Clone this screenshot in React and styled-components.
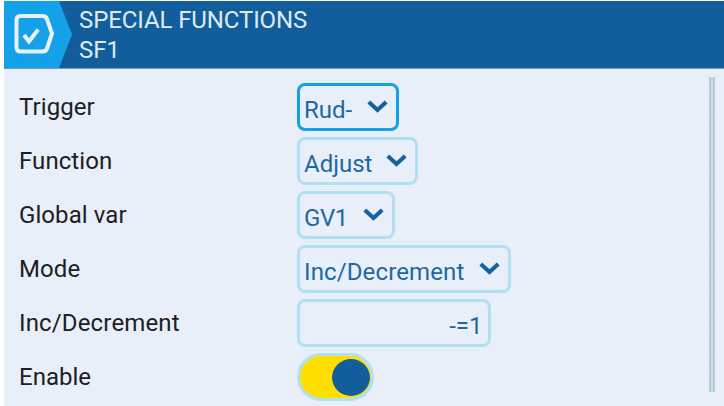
import styled, { createGlobalStyle } from "styled-components";

const GlobalStyle = createGlobalStyle`
  * {
    box-sizing: border-box;
  }

  body {
    margin: 0;
    background: #ffffff;
    font-family: Roboto, "Liberation Sans", sans-serif;
  }
`;

const Screen = styled.div`
  width: 724px;
  height: 406px;
  padding: 1px 0 0 4px;
  overflow: hidden;
`;

const Page = styled.div`
  height: 405px;
  display: flex;
  flex-direction: column;
  background: #e8eff8;
`;

const Header = styled.header`
  height: 68px;
  flex: none;
  display: flex;
  background: #125e9c;
  border-bottom: 1px solid #6d9cc3;
`;

const HeaderIcon = styled.svg`
  width: 68px;
  height: 67px;
  flex: none;
`;

const Titles = styled.div`
  padding: 4px 0 0 7px;
  display: flex;
  flex-direction: column;
  color: #dfeaf5;
  font-size: 24px;
  line-height: 30px;
`;

const Title = styled.span`
  width: fit-content;
  letter-spacing: ${props => props.$spacing || 0}px;
`;

const Body = styled.main`
  flex: 1;
  display: flex;
  justify-content: space-between;
  padding: 8px 9px 0 15px;
`;

const Form = styled.div`
  padding-top: 6px;
  display: flex;
  flex-direction: column;
  gap: 6px;
`;

const Row = styled.div`
  display: grid;
  grid-template-columns: 278px auto;
  height: 48px;
`;

const Label = styled.label`
  color: #1c2024;
  font-size: 24px;
  line-height: 28px;
  padding-top: 10px;
  letter-spacing: ${props => props.$spacing || 0}px;
`;

const Field = styled.button`
  width: ${props => props.$width}px;
  height: 48px;
  margin: 0;
  padding: 5px ${props => props.$right ? 5.5 : 8}px 0 4px;
  display: flex;
  align-items: center;
  justify-content: ${props => props.$right ? "flex-end" : "space-between"};
  border: 3px solid ${props => props.$focused ? "#14a1e5" : "#b2e0f3"};
  border-radius: 8px;
  background: transparent;
  color: #1f67a3;
  font-family: inherit;
  font-size: 24px;
  line-height: 28px;
`;

const Value = styled.span`
  letter-spacing: ${props => props.$spacing || 0}px;
`;

const Chevron = styled.svg`
  width: 21px;
  height: 13px;
  margin-top: -6px;
  flex: none;
`;

const Toggle = styled.button`
  width: 77px;
  height: 48px;
  margin: 0;
  padding: 0 1px;
  display: flex;
  align-items: center;
  justify-content: flex-end;
  border: 3px solid #b2e0f3;
  border-radius: 24px;
  background: #fedf00;
`;

const Knob = styled.span`
  width: 38px;
  height: 37px;
  border-radius: 50%;
  background: #125e9c;
`;

const ScrollBar = styled.div`
  width: 6px;
  height: 315px;
  background: repeating-linear-gradient(to bottom, #d3e0c5 0 2px, #b9d0dd 2px 3px, #cfe0e6 3px 5px);
  border: solid #b3cce0;
  border-width: 0 2px;
`;

const FIELDS = [
    { label: "Trigger", value: "Rud-", width: 102, focused: true },
    { label: "Function", value: "Adjust", width: 121 },
    { label: "Global var", value: "GV1", width: 98, spacing: -0.4 },
    { label: "Mode", value: "Inc/Decrement", width: 214, spacing: 0.12 },
];

const Arrow = () => (
    <Chevron viewBox="0 0 21 13">
        <path d="M1.8 2 L10.5 10 L19.2 2" fill="none" stroke="#1662a1" strokeWidth="4.1" />
    </Chevron>
);

const App = () => (
    <Screen>
        <GlobalStyle />
        <Page>
            <Header>
                <HeaderIcon viewBox="0 0 68 67">
                    <path d="M0 0 H55 L68 33.5 L55 67 H0 Z" fill="#14a1e8" />
                    <path
                        d="M16.5 15 H38.5 Q42 15 43 18 L48 32.5 L43 47.5 Q42 50.5 38.5 50.5 H16.5 Q12.5 50.5 12.5 46.5 V19 Q12.5 15 16.5 15 Z"
                        fill="none"
                        stroke="#e8f1fa"
                        strokeWidth="4"
                    />
                    <path d="M20 34 L25 40.5 L34.2 28.5" fill="none" stroke="#e8f1fa" strokeWidth="4" />
                </HeaderIcon>
                <Titles>
                    <Title $spacing={-0.1}>SPECIAL FUNCTIONS</Title>
                    <Title>SF1</Title>
                </Titles>
            </Header>
            <Body>
                <Form>
                    {FIELDS.map(field => (
                        <Row key={field.label}>
                            <Label $spacing={0.08}>{field.label}</Label>
                            <Field $width={field.width} $focused={field.focused}>
                                <Value $spacing={field.spacing}>{field.value}</Value>
                                <Arrow />
                            </Field>
                        </Row>
                    ))}
                    <Row>
                        <Label $spacing={0.15}>Inc/Decrement</Label>
                        <Field $width={194} $right>
                            <Value>-=1</Value>
                        </Field>
                    </Row>
                    <Row>
                        <Label>Enable</Label>
                        <Toggle aria-label="Enable">
                            <Knob />
                        </Toggle>
                    </Row>
                </Form>
                <ScrollBar />
            </Body>
        </Page>
    </Screen>
);

export default App;
